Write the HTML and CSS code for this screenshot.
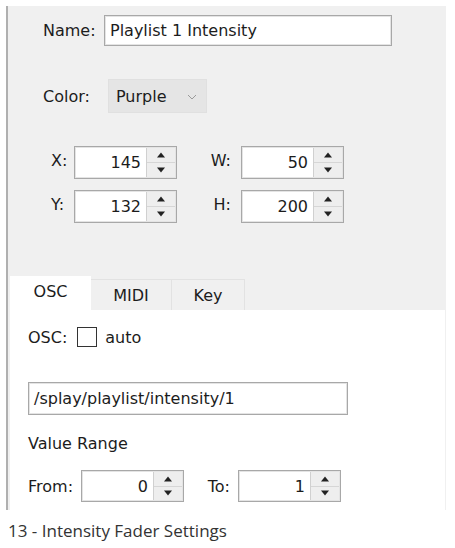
FILE: index.html
```html
<!DOCTYPE html>
<html lang="en">

<head>
    <meta charset="UTF-8">
    <meta name="viewport" content="width=device-width, initial-scale=1.0">
    <title>Intensity Fader Settings</title>
    <link rel="stylesheet" href="styles.css">
</head>

<body>
    <div class="dialog">
        <div class="props">
            <div class="row name-row">
                <span class="lbl">Name:</span>
                <div class="field name-field">Playlist 1 Intensity</div>
            </div>
            <div class="row color-row">
                <span class="lbl">Color:</span>
                <div class="combo">
                    <span>Purple</span>
                    <svg class="chev" width="10" height="6" viewBox="0 0 10 6">
                        <path d="M1 1 L5 5 L9 1" fill="none" stroke="#9a9a9a" stroke-width="1" />
                    </svg>
                </div>
            </div>
            <div class="geom">
                <span class="glbl">X:</span>
                <div class="spin"><span class="val">145</span><div class="btns"><div class="up"></div><div class="down"></div></div></div>
                <span class="glbl">W:</span>
                <div class="spin"><span class="val">50</span><div class="btns"><div class="up"></div><div class="down"></div></div></div>
                <span class="glbl">Y:</span>
                <div class="spin"><span class="val">132</span><div class="btns"><div class="up"></div><div class="down"></div></div></div>
                <span class="glbl">H:</span>
                <div class="spin"><span class="val">200</span><div class="btns"><div class="up"></div><div class="down"></div></div></div>
            </div>
        </div>
        <div class="tabs">
            <div class="tab active">OSC</div>
            <div class="tab">MIDI</div>
            <div class="tab">Key</div>
        </div>
        <div class="tab-body">
            <div class="osc-row">
                <span>OSC:</span>
                <span class="check"></span>
                <span>auto</span>
            </div>
            <div class="field path-field">/splay/playlist/intensity/1</div>
            <div class="section">Value Range</div>
            <div class="range-row">
                <span class="rlbl">From:</span>
                <div class="spin"><span class="val">0</span><div class="btns"><div class="up"></div><div class="down"></div></div></div>
                <span class="rlbl to">To:</span>
                <div class="spin"><span class="val">1</span><div class="btns"><div class="up"></div><div class="down"></div></div></div>
            </div>
        </div>
    </div>
    <p class="caption">13 - Intensity Fader Settings</p>
</body>

</html>
```

FILE: styles.css
```css
* {
    margin: 0;
    padding: 0;
    box-sizing: border-box;
}

body {
    background: #fff;
    font-family: "DejaVu Sans", sans-serif;
    font-size: 16px;
    color: #1c1c1c;
}

.dialog {
    margin: 6px 9px 0 6px;
    border-left: 2px solid #b0b0b0;
    background: #f0f0f0;
}

.props {
    padding: 9px 0 55px 35px;
}

.row {
    display: flex;
    align-items: center;
}

.name-row .lbl {
    width: 61px;
}

.name-field {
    width: 288px;
    height: 31px;
}

.field {
    background: #fff;
    border: 1px solid #a8a8a8;
    box-shadow: inset 0 0 0 1px #e4e4e4;
    display: flex;
    align-items: center;
    padding-left: 5px;
}

.color-row {
    margin-top: 33px;
}

.color-row .lbl {
    width: 65px;
}

.combo {
    width: 99px;
    height: 34px;
    background: #e5e5e5;
    border: 1px solid #e0e0e0;
    display: flex;
    align-items: center;
    justify-content: space-between;
    padding: 0 9px 0 7px;
}

.chev {
    margin-top: 1px;
}

.geom {
    margin-top: 33px;
    margin-left: 8px;
    display: grid;
    grid-template-columns: 23px 103px 64px 103px;
    grid-auto-rows: 33px;
    row-gap: 11px;
    align-items: center;
}

.glbl {
    text-align: right;
    padding-right: 10px;
    margin-top: -5px;
}

.geom .glbl:nth-child(4n+1) {
    text-align: left;
    padding-right: 0;
}

.spin {
    height: 33px;
    background: #fff;
    border: 1px solid #a8a8a8;
    box-shadow: inset 0 0 0 1px #e4e4e4;
    display: flex;
    align-items: stretch;
}

.spin .val {
    flex: 1;
    text-align: right;
    padding-right: 5px;
    line-height: 31px;
}

.btns {
    width: 29px;
    display: flex;
    flex-direction: column;
    border-left: 1px solid #d0d0d0;
    margin: 1px 1px 1px 0;
}

.btns .up,
.btns .down {
    flex: 1;
    background: #eeeeee;
    position: relative;
}

.btns .up {
    border-bottom: 1px solid #d6d6d6;
}

.btns .up::after,
.btns .down::after {
    content: "";
    position: absolute;
    left: 50%;
    top: 50%;
    transform: translate(-50%, -50%);
    border-left: 4px solid transparent;
    border-right: 4px solid transparent;
}

.btns .up::after {
    border-bottom: 5px solid #222;
}

.btns .down::after {
    border-top: 5px solid #222;
}

.tabs {
    display: flex;
    align-items: flex-end;
    height: 32px;
    padding-left: 2px;
}

.tab {
    width: 81px;
    height: 31px;
    background: #f0f0f0;
    border: 1px solid #e2e2e2;
    border-bottom: none;
    text-align: center;
    line-height: 32px;
}

.tab+.tab {
    border-left: none;
}

.tab:nth-child(3) {
    width: 73px;
}

.tab.active {
    height: 36px;
    margin-bottom: -2px;
    background: #fff;
    border: none;
    line-height: 32px;
    position: relative;
    z-index: 1;
}

.tab-body {
    background: #fff;
    margin: 0 1px 0 2px;
    padding: 17px 0 8px 18px;
}

.osc-row {
    display: flex;
    align-items: center;
    height: 20px;
}

.check {
    width: 20px;
    height: 20px;
    border: 1px solid #333;
    margin: 0 8px 0 10px;
}

.path-field {
    margin-top: 35px;
    width: 320px;
    height: 33px;
}

.section {
    margin-top: 19px;
    line-height: 20px;
}

.range-row {
    margin-top: 16px;
    display: flex;
    align-items: center;
}

.range-row .spin {
    width: 103px;
    height: 32px;
}

.rlbl {
    width: 53px;
}

.rlbl.to {
    width: 54px;
    text-align: right;
    padding-right: 8px;
}

.caption {
    margin: 10px 0 0 8px;
    font-family: "Open Sans", sans-serif;
    font-size: 17px;
    line-height: 22px;
    color: #333;
}
```
